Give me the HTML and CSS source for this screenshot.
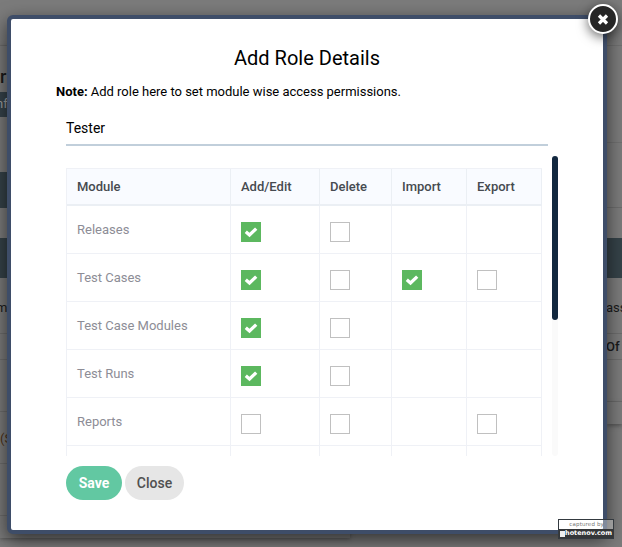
FILE: index.html
```html
<!DOCTYPE html>
<html lang="en">
<head>
<meta charset="utf-8">
<title>Add Role Details</title>
<link rel="stylesheet" href="styles.css">
</head>
<body>
<div class="page">
  <div class="topbar"></div>
  <div class="backdrop">
    <div class="side side-left">
      <div class="s-title">r</div>
      <div class="s-button">nf</div>
      <div class="s-gap"></div>
      <div class="s-bar"></div>
      <div class="s-space"></div>
      <div class="s-head"></div>
      <div class="s-row r1">m</div>
      <div class="s-row r2"></div>
      <div class="s-row r3"></div>
      <div class="s-row r4 warn">(S</div>
      <div class="s-row r4"></div>
      <div class="s-row r5"></div>
    </div>
    <div class="side side-right">
      <div class="t-gap"></div>
      <div class="t-panel"></div>
      <div class="t-space"></div>
      <div class="s-head"></div>
      <div class="s-row r1">ass</div>
      <div class="s-row r2 strong">Of</div>
      <div class="s-row t3"></div>
      <div class="t-end"></div>
    </div>
  </div>
</div>
<div class="modal">
  <button class="dismiss" aria-label="Close dialog"><svg width="12" height="12" viewBox="0 0 12 12"><path d="M2 2.5L10 10.5M10 2.5L2 10.5"/></svg></button>
  <h1>Add Role Details</h1>
  <p class="note"><b>Note:</b> Add role here to set module wise access permissions.</p>
  <div class="field">Tester</div>
  <div class="scroller">
    <table>
      <colgroup><col class="c1"><col class="c2"><col class="c3"><col class="c4"><col class="c5"></colgroup>
      <thead><tr><th>Module</th><th>Add/Edit</th><th>Delete</th><th>Import</th><th>Export</th></tr></thead>
      <tbody>
        <tr><td>Releases</td><td><i class="box on"><svg viewBox="0 0 20 20"><path d="M4.8 9.8L8.5 13L15.2 6.6"/></svg></i></td><td><i class="box"></i></td><td></td><td></td></tr>
        <tr><td>Test Cases</td><td><i class="box on"><svg viewBox="0 0 20 20"><path d="M4.8 9.8L8.5 13L15.2 6.6"/></svg></i></td><td><i class="box"></i></td><td><i class="box on"><svg viewBox="0 0 20 20"><path d="M4.8 9.8L8.5 13L15.2 6.6"/></svg></i></td><td><i class="box"></i></td></tr>
        <tr><td>Test Case Modules</td><td><i class="box on"><svg viewBox="0 0 20 20"><path d="M4.8 9.8L8.5 13L15.2 6.6"/></svg></i></td><td><i class="box"></i></td><td></td><td></td></tr>
        <tr><td>Test Runs</td><td><i class="box on"><svg viewBox="0 0 20 20"><path d="M4.8 9.8L8.5 13L15.2 6.6"/></svg></i></td><td><i class="box"></i></td><td></td><td></td></tr>
        <tr><td>Reports</td><td><i class="box"></i></td><td><i class="box"></i></td><td></td><td><i class="box"></i></td></tr>
        <tr><td></td><td></td><td></td><td></td><td></td></tr>
      </tbody>
    </table>
    <div class="track"><div class="thumb"></div></div>
  </div>
  <div class="actions"><button class="save">Save</button><button class="close">Close</button></div>
</div>
<div class="stamp"><div class="stamp-top">captured by</div><div class="stamp-name"><span class="mark"></span>hotenov.com</div></div>
</body>
</html>
```
FILE: styles.css
```css
* { box-sizing: border-box; }
body {
  margin: 0;
  width: 622px;
  height: 547px;
  overflow: hidden;
  position: relative;
  background: #7b7b7b;
  font-family: Roboto, "Liberation Sans", sans-serif;
  font-size: 13px;
  color: #000;
}
button { border: 0; padding: 0; font-family: inherit; }

/* Dimmed page behind the dialog */
.page { height: 547px; }
.topbar { height: 46px; border-bottom: 1px solid #707070; }
.backdrop { display: flex; justify-content: space-between; height: 501px; }
.side { overflow: hidden; white-space: nowrap; color: #1a1a1a; }
.side-left { width: 350px; height: 492px; background: #7a7a7a; box-shadow: 0 1px 4px #555; }
.side-right { width: 15px; }
.s-title { height: 46px; padding-top: 20px; font-size: 18px; line-height: 22px; font-weight: 500; }
.s-button { height: 25px; text-indent: -4px; background: #35424a; color: #a0a0a0; line-height: 24px; }
.s-gap { height: 55px; }
.s-bar { height: 36px; background: #354248; }
.s-space { height: 30px; }
.s-head { height: 40px; background: #354248; }
.s-row { border-bottom: 1px solid #6c6c6c; }
.side-left .r1 { text-indent: -4px; }
.r1 { height: 56px; line-height: 59px; }
.side-right .r1 { text-indent: -1px; }
.r2 { height: 26px; line-height: 26px; }
.r3 { height: 52px; }
.r4 { height: 52px; line-height: 53px; }
.warn { color: #4b3015; }
.strong { font-weight: 500; font-size: 13px; text-indent: -1px; }
.r5 { height: 22px; border: 0; }
.t-gap { height: 96px; }
.t-panel { height: 66px; border-top: 1px solid #707070; border-bottom: 1px solid #6c6c6c; }
.t-space { height: 30px; }
.t3 { height: 42px; }
.t-end { height: 22px; box-shadow: 0 2px 4px #555; }

.modal {
  position: absolute;
  left: 7px;
  top: 15px;
  width: 600px;
  height: 519px;
  border: 4px solid #3e4d68;
  border-radius: 6px;
  background: #fff;
  box-shadow: 0 6px 18px rgba(0, 0, 0, .6);
  padding: 24px 45px 0;
}
.dismiss {
  position: absolute;
  right: -15px;
  top: -15px;
  width: 30px;
  height: 30px;
  border: 2px solid #fff;
  border-radius: 50%;
  background: #262626;
  box-shadow: 0 3px 12px rgba(0, 0, 0, .6);
  display: grid;
  place-items: center;
}
.dismiss svg { fill: none; stroke: #fff; stroke-width: 3.2; }
h1 {
  margin: 0;
  font-size: 20px;
  line-height: 30px;
  font-weight: 400;
  text-align: center;
}
.note { margin: 9px 0 0; line-height: 20px; letter-spacing: -.01px; }
.field {
  width: 482px;
  height: 35px;
  margin: 9px 0 0 10px;
  border-bottom: 2px solid #c1cfdb;
  font-size: 14px;
  line-height: 34px;
}
.scroller {
  display: flex;
  justify-content: space-between;
  width: 492px;
  height: 300px;
  margin: 10px 0 0 10px;
  overflow: hidden;
}
table {
  margin-top: 12px;
  width: 476px;
  height: 326px;
  table-layout: fixed;
  border-collapse: separate;
  border-spacing: 0;
  border: solid #eff1f6;
  border-width: 1px 0 0 1px;
}
.c1 { width: 164px; }
.c2 { width: 89px; }
.c3 { width: 72px; }
.c4, .c5 { width: 75px; }
th, td {
  padding: 0 10px;
  text-align: left;
  border: solid #eff1f6;
  border-width: 0 1px 1px 0;
}
th {
  height: 37px;
  border-color: #ebeff4;
  border-bottom-width: 2px;
  background: #f9fbff;
  color: #464a50;
  font-weight: 500;
}
td { height: 48px; color: #8d8d96; }
.box {
  display: block;
  width: 20px;
  height: 20px;
  margin-top: 5px;
  border: 1px solid #c0c0c0;
}
.on { border: 0; background: #5cb85f; }
.on svg { display: block; fill: none; stroke: #fff; stroke-width: 3.3; }
.track { width: 6px; height: 300px; border-radius: 3px; background: #fafafa; }
.thumb { height: 164px; border-radius: 3px; background: #12283f; }
.actions { display: flex; gap: 3px; margin: 10px 0 0 10px; }
.actions button {
  height: 34px;
  border-radius: 17px;
  font-size: 14px;
  font-weight: 500;
}
.actions .save { width: 56px; background: #62c8a2; color: #fff; font-weight: 700; }
.actions .close { width: 59px; background: #e6e6e6; color: #505050; }

/* Capture label */
.stamp {
  position: absolute;
  left: 558px;
  top: 519px;
  width: 56px;
  height: 20px;
  border: 1px solid #343a40;
  font-family: "DejaVu Sans", sans-serif;
  white-space: nowrap;
}
.stamp-top {
  height: 9px;
  padding-right: 9px;
  background: rgba(255, 255, 255, .35);
  color: #777;
  font-size: 5.5px;
  line-height: 8px;
  letter-spacing: .15px;
  text-align: right;
}
.stamp-name {
  display: flex;
  align-items: center;
  height: 9px;
  padding-left: 1px;
  background: #343638;
  color: #fff;
  font-size: 6.5px;
  font-weight: 700;
  line-height: 9px;
}
.mark { flex: none; width: 5px; height: 6px; background: #eee; }
```
